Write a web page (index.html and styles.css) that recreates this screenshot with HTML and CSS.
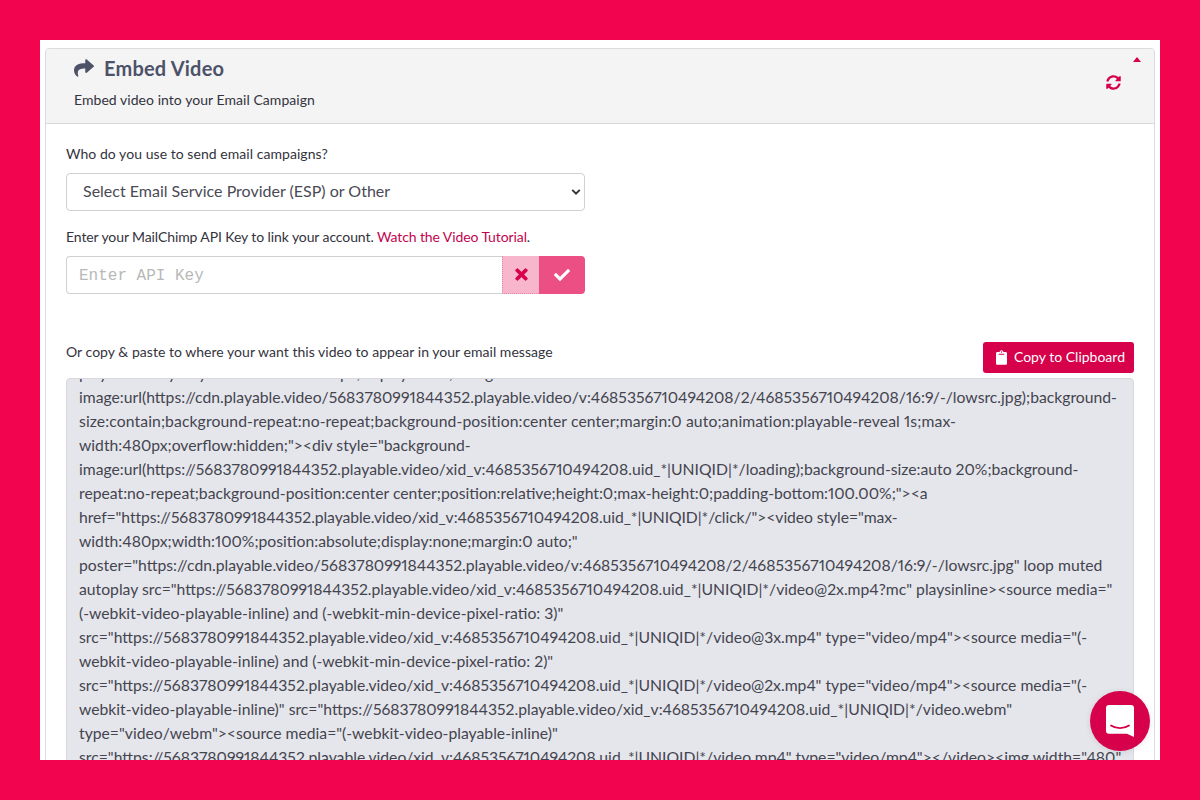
FILE: index.html
```html
<!DOCTYPE html>
<html lang="en">
<head>
<meta charset="utf-8">
<title>Embed Video</title>
<link rel="stylesheet" href="styles.css">
</head>
<body>
<main class="frame">
  <section class="card">
    <header class="card-head">
      <div class="head-text">
        <h1 class="title">
          <svg class="share-icon" viewBox="0 0 512 512"><path d="M503.7 189.8 327.7 37.9C312.3 24.6 288 35.4 288 56v80C127.400 137.800 0 170 0 322.300c0 61.400 39.600 122.300 83.300 154.100 13.600 9.900 33.100-2.500 28.100-18.600C66.100 313 132.800 273.300 288 271.100V360c0 20.600 24.300 31.400 39.700 18.100l176-152c11.100-9.600 11.100-26.700 0-36.300z"/></svg>
          <span>Embed Video</span>
        </h1>
        <p class="subtitle">Embed video into your Email Campaign</p>
      </div>
      <div class="head-actions">
        <span class="caret"></span>
        <svg class="sync-icon" viewBox="0 0 512 512"><path d="M370.720 133.280C339.458 104.008 298.888 87.962 255.848 88c-77.458.068-144.328 53.178-162.791 126.850-1.344 5.363-6.122 9.150-11.651 9.150H24.103c-7.498 0-13.194-6.807-11.807-14.176C33.933 94.924 134.813 8 256 8c66.448 0 126.791 26.136 171.315 68.685L463.030 40.970C478.149 25.851 504 36.559 504 57.941V192c0 13.255-10.745 24-24 24H345.941c-21.382 0-32.090-25.851-16.971-40.971l41.750-41.749zM32 296h134.059c21.382 0 32.090 25.851 16.971 40.971l-41.750 41.750c31.262 29.273 71.835 45.319 114.876 45.280 77.418-.070 144.315-53.144 162.787-126.849 1.344-5.363 6.122-9.150 11.651-9.150h57.304c7.498 0 13.194 6.807 11.807 14.176C478.067 417.076 377.187 504 256 504c-66.448 0-126.791-26.136-171.315-68.685L48.970 471.030C33.851 486.149 8 475.441 8 454.059V320c0-13.255 10.745-24 24-24z"/></svg>
      </div>
    </header>
    <div class="card-body">
      <label class="field-label">Who do you use to send email campaigns?</label>
      <div class="select-box">
        <span>Select Email Service Provider (ESP) or Other</span>
        <svg class="chevron" viewBox="0 0 12 8"><path d="M1.500 1.500 6 6l4.500-4.500"/></svg>
      </div>
      <p class="field-label api-label">Enter your MailChimp API Key to link your account. <a class="tutorial" href="#">Watch the Video Tutorial</a>.</p>
      <div class="input-group">
        <input class="api-input" type="text" placeholder="Enter API Key">
        <button class="btn-x" type="button" aria-label="Clear">
          <svg viewBox="0 0 352 512"><path d="m242.720 256 100.070-100.070c12.280-12.280 12.280-32.190 0-44.480l-22.240-22.240c-12.280-12.280-32.190-12.280-44.480 0L176 189.280 75.930 89.210c-12.280-12.280-32.190-12.280-44.480 0L9.210 111.450c-12.280 12.280-12.280 32.190 0 44.480L109.280 256 9.210 356.070c-12.280 12.280-12.280 32.190 0 44.480l22.240 22.240c12.280 12.280 32.200 12.280 44.480 0L176 322.720l100.070 100.070c12.280 12.280 32.200 12.280 44.480 0l22.240-22.240c12.280-12.280 12.280-32.190 0-44.480L242.720 256z"/></svg>
        </button>
        <button class="btn-check" type="button" aria-label="Confirm">
          <svg viewBox="0 0 512 512"><path d="M173.898 439.404l-166.400-166.400c-9.997-9.997-9.997-26.206 0-36.204l36.203-36.204c9.997-9.998 26.207-9.998 36.204 0L192 312.690 432.095 72.596c9.997-9.997 26.207-9.997 36.204 0l36.203 36.204c9.997 9.997 9.997 26.206 0 36.204l-294.400 294.401c-9.998 9.997-26.207 9.997-36.204-.001z"/></svg>
        </button>
      </div>
      <div class="copy-row">
        <p class="copy-label">Or copy &amp; paste to where your want this video to appear in your email message</p>
        <button class="btn-copy" type="button">
          <svg viewBox="0 0 384 512"><path d="M384 112v352c0 26.510-21.490 48-48 48H48c-26.510 0-48-21.490-48-48V112c0-26.510 21.490-48 48-48h80c0-35.290 28.710-64 64-64s64 28.710 64 64h80c26.510 0 48 21.490 48 48zM192 40c-13.255 0-24 10.745-24 24s10.745 24 24 24 24-10.745 24-24-10.745-24-24-24m96 114v-20a6 6 0 0 0-6-6H102a6 6 0 0 0-6 6v20a6 6 0 0 0 6 6h180a6 6 0 0 0 6-6z"/></svg>
          <span>Copy to Clipboard</span>
        </button>
      </div>
      <div class="code-box">
        <div class="code-line code-clip">playable-body" style="max-width:480px;display:block;background-</div>
        <div class="code-line">image:url(https://cdn.playable.video/5683780991844352.playable.video/v:4685356710494208/2/4685356710494208/16:9/-/lowsrc.jpg);background-</div>
        <div class="code-line code-loose">size:contain;background-repeat:no-repeat;background-position:center center;margin:0 auto;animation:playable-reveal 1s;max-</div>
        <div class="code-line">width:480px;overflow:hidden;"&gt;&lt;div style="background-</div>
        <div class="code-line">image:url(https://5683780991844352.playable.video/xid_v:4685356710494208.uid_*|UNIQID|*/loading);background-size:auto 20%;background-</div>
        <div class="code-line">repeat:no-repeat;background-position:center center;position:relative;height:0;max-height:0;padding-bottom:100.00%;"&gt;&lt;a</div>
        <div class="code-line code-tight">href="https://5683780991844352.playable.video/xid_v:4685356710494208.uid_*|UNIQID|*/click/"&gt;&lt;video style="max-</div>
        <div class="code-line">width:480px;width:100%;position:absolute;display:none;margin:0 auto;"</div>
        <div class="code-line">poster="https://cdn.playable.video/5683780991844352.playable.video/v:4685356710494208/2/4685356710494208/16:9/-/lowsrc.jpg" loop muted</div>
        <div class="code-line">autoplay src="https://5683780991844352.playable.video/xid_v:4685356710494208.uid_*|UNIQID|*/video@2x.mp4?mc" playsinline&gt;&lt;source media="</div>
        <div class="code-line">(-webkit-video-playable-inline) and (-webkit-min-device-pixel-ratio: 3)"</div>
        <div class="code-line">src="https://5683780991844352.playable.video/xid_v:4685356710494208.uid_*|UNIQID|*/video@3x.mp4" type="video/mp4"&gt;&lt;source media="(-</div>
        <div class="code-line">webkit-video-playable-inline) and (-webkit-min-device-pixel-ratio: 2)"</div>
        <div class="code-line">src="https://5683780991844352.playable.video/xid_v:4685356710494208.uid_*|UNIQID|*/video@2x.mp4" type="video/mp4"&gt;&lt;source media="(-</div>
        <div class="code-line">webkit-video-playable-inline)" src="https://5683780991844352.playable.video/xid_v:4685356710494208.uid_*|UNIQID|*/video.webm"</div>
        <div class="code-line">type="video/webm"&gt;&lt;source media="(-webkit-video-playable-inline)"</div>
        <div class="code-line">src="https://5683780991844352.playable.video/xid_v:4685356710494208.uid_*|UNIQID|*/video.mp4" type="video/mp4"&gt;&lt;/video&gt;&lt;img width="480"</div>
      </div>
    </div>
  </section>
  <button class="chat-bubble" type="button" aria-label="Chat">
    <svg viewBox="0 0 28 32"><path class="chat-shape" d="M3 0h22a3 3 0 0 1 3 3v29l-7-3.200H3a3 3 0 0 1-3-3V3a3 3 0 0 1 3-3z"/><path class="chat-smile" d="M5 20.500c5 3.500 13 3.500 18 0"/></svg>
  </button>
</main>
</body>
</html>
```
FILE: styles.css
```css
* { box-sizing: border-box; }
html, body { height: 100%; }
body {
  margin: 0;
  background: #f2044f;
  padding: 40px;
  overflow: hidden;
  font-family: "Lato", "Open Sans", sans-serif;
  font-variant-numeric: proportional-nums;
  color: #33333d;
}
.frame {
  position: relative;
  height: 720px;
  background: #fff;
  padding: 8px 5px 0;
  overflow: hidden;
}
.card {
  height: 760px;
  border: 1px solid #dcdcdc;
  border-radius: 4px;
  background: #fff;
}
.card-head {
  display: flex;
  justify-content: space-between;
  height: 75px;
  padding: 0 13px 0 28px;
  background: #f4f4f5;
  border-bottom: 1px solid #d8d8d8;
  border-radius: 4px 4px 0 0;
}
.title {
  display: flex;
  align-items: center;
  gap: 10px;
  margin: 7px 0 0;
  height: 24px;
  font-size: 20px;
  font-weight: 700;
  letter-spacing: .2px;
  color: #4d5269;
}
.share-icon { width: 20px; height: 20px; fill: #4d5269; }
.subtitle { margin: 10px 0 0; font-size: 14px; line-height: 20px; letter-spacing: .05px; color: #33333d; }
.head-actions {
  display: flex;
  flex-direction: column;
  align-items: flex-end;
}
.caret {
  width: 0;
  height: 0;
  margin: 8px 0 0;
  border-left: 4.500px solid transparent;
  border-right: 4.500px solid transparent;
  border-bottom: 5px solid #d6004b;
}
.sync-icon { width: 15px; height: 15px; margin: 13px 20px 0 0; fill: #d6004b; }
.card-body { padding: 20px 20px 0; }
.field-label { display: block; margin: 0; font-size: 14px; line-height: 20px; letter-spacing: .05px; color: #33333d; }
.select-box {
  display: flex;
  align-items: center;
  justify-content: space-between;
  width: 519px;
  height: 38px;
  margin-top: 9px;
  padding: 0 3px 4px 16px;
  border: 1px solid #d0d0d0;
  border-radius: 4px;
  font-size: 16px;
  color: #4a4a55;
}
.chevron { width: 10px; height: 8px; margin-top: 4px; fill: none; stroke: #33333d; stroke-width: 2.400; }
.api-label { margin-top: 16px; letter-spacing: -.1px; }
.tutorial { color: #c2044f; text-decoration: none; }
.input-group {
  display: flex;
  width: 519px;
  height: 38px;
  margin-top: 9px;
}
.api-input {
  flex: 1;
  min-width: 0;
  padding: 1px 12px 0;
  border: 1px solid #d0d0d0;
  border-right: 0;
  border-radius: 4px 0 0 4px;
  background: #fff;
  font-family: "Liberation Mono", monospace;
  font-size: 16px;
  outline: 0;
}
.api-input::placeholder { color: #b8b8b8; opacity: 1; }
.btn-x, .btn-check {
  display: flex;
  align-items: center;
  justify-content: center;
  height: 38px;
  padding: 0;
  border: 0;
}
.btn-x { width: 37px; background: #f8b6cd; border-left: 1px dotted #e58aa8; border-bottom: 1px dotted #e58aa8; }
.btn-x svg { width: 13px; height: 17px; fill: #d6004b; stroke: #d6004b; stroke-width: 24; }
.btn-check { width: 46px; background: #ec4f83; border-radius: 0 4px 4px 0; }
.btn-check svg { width: 16px; height: 16px; fill: #fff; }
.copy-row {
  display: flex;
  justify-content: space-between;
  align-items: flex-start;
  margin-top: 48px;
}
.copy-label { margin: 0; font-size: 14px; line-height: 20px; letter-spacing: .03px; color: #33333d; }
.btn-copy {
  display: flex;
  align-items: center;
  gap: 7px;
  height: 31px;
  padding: 0 9px 3px 13px;
  border: 0;
  border-radius: 3px;
  background: #d6004b;
  color: #fff;
  font-family: inherit;
  font-size: 14px;
  white-space: nowrap;
}
.btn-copy svg { width: 11px; height: 15px; margin-top: 2px; fill: #fff; }
.code-box {
  height: 400px;
  margin-top: 5px;
  border: 1px solid #d8d8de;
  border-radius: 4px;
  background: #e5e6eb;
  padding: 0 12px;
  overflow: hidden;
}
.code-line {
  height: 24px;
  font-size: 15.720px;
  line-height: 24px;
  color: #44444f;
  white-space: nowrap;
}
.code-clip { margin-top: -18px; }
.code-loose { letter-spacing: .1px; }
.code-tight { letter-spacing: -.08px; }
.chat-bubble {
  position: absolute;
  right: 10px;
  bottom: 9px;
  width: 60px;
  height: 60px;
  display: flex;
  align-items: center;
  justify-content: center;
  border: 0;
  padding: 0;
  border-radius: 50%;
  background: #d6004b;
  box-shadow: 0 1px 6px rgba(0,0,0,.1);
}
.chat-bubble svg { width: 28px; height: 32px; }
.chat-shape { fill: #fff; }
.chat-smile { fill: none; stroke: #d6004b; stroke-width: 1.800; stroke-linecap: round; }
```
